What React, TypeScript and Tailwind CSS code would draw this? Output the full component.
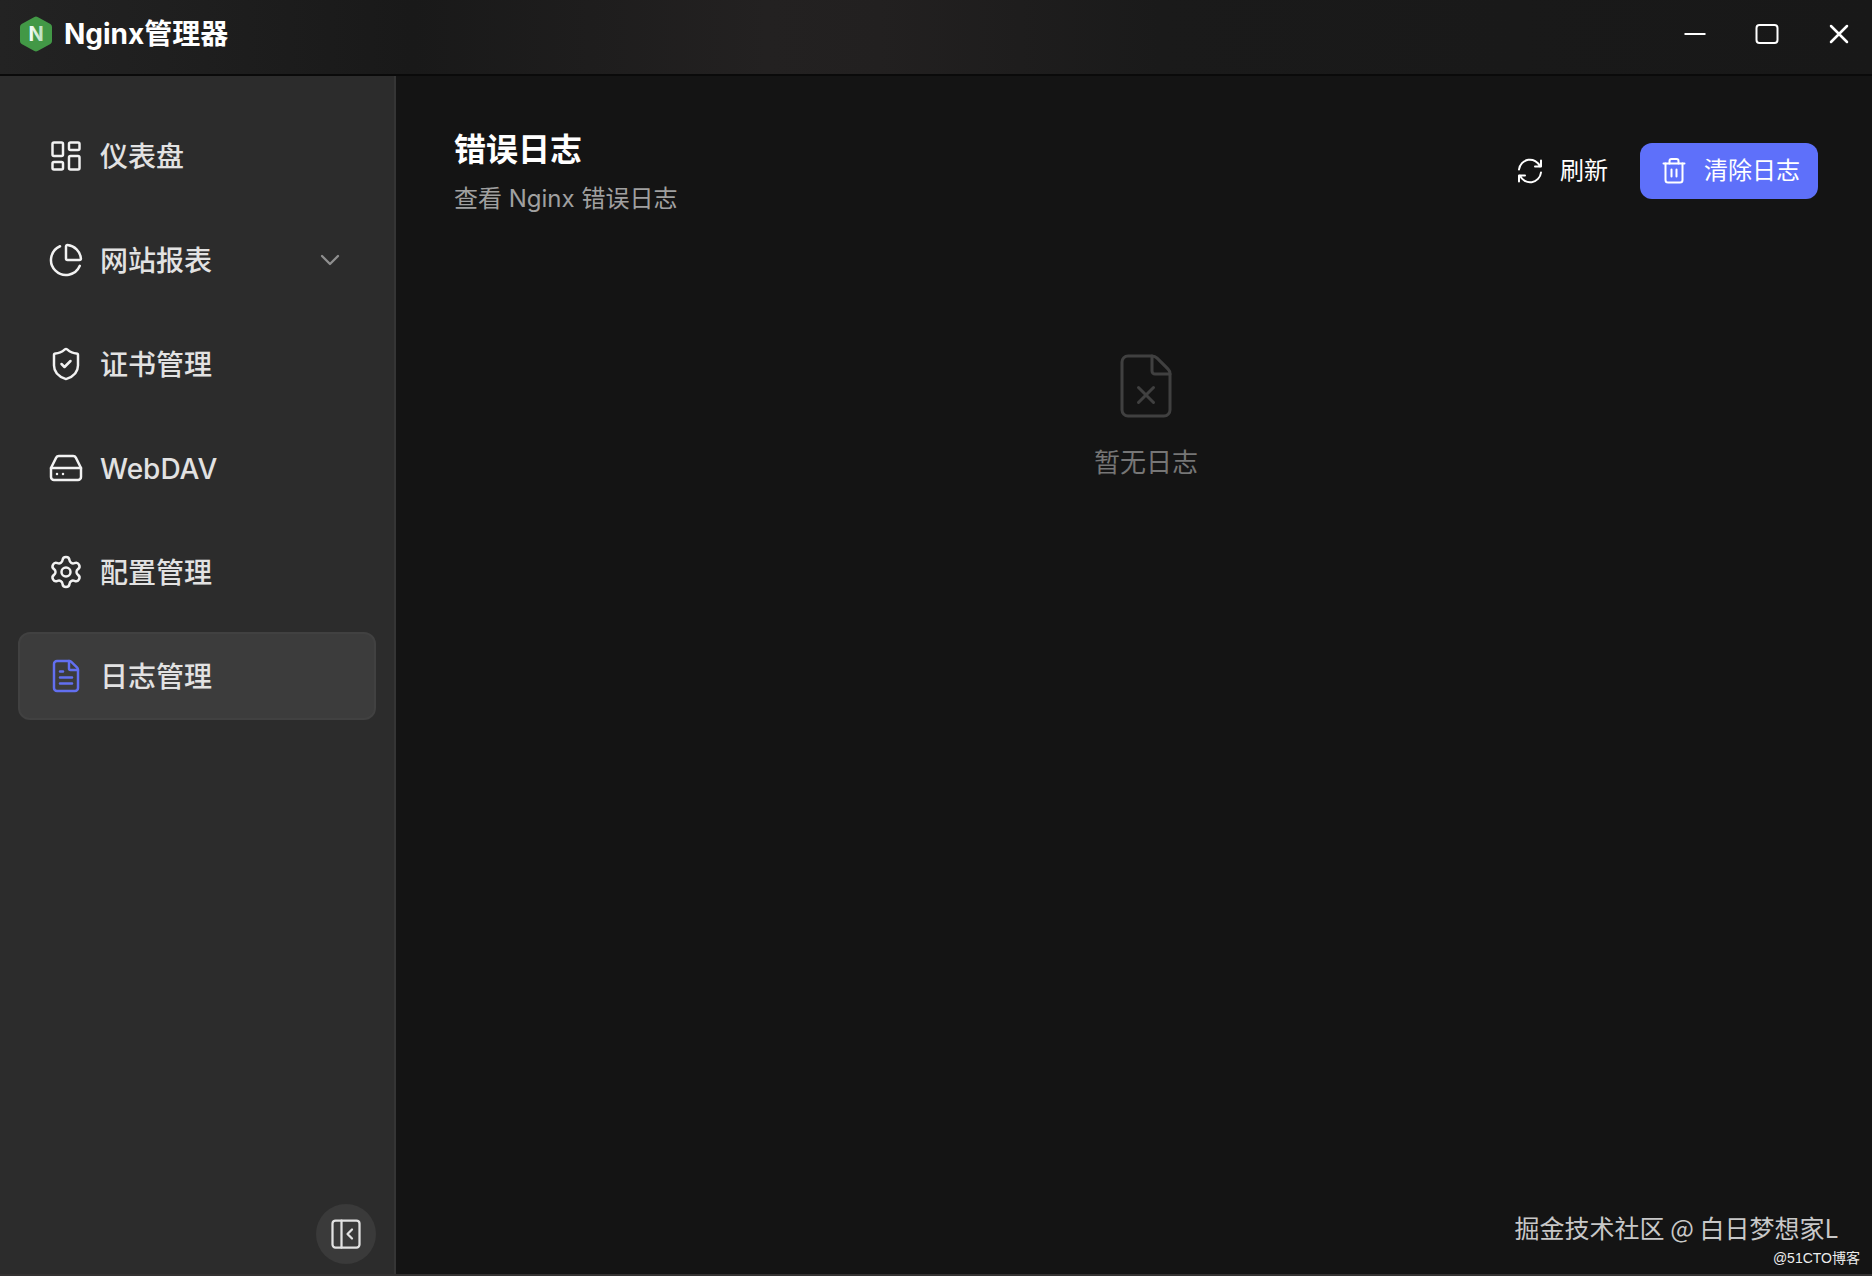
import React, { useState } from 'react';
import {
    ChartPie,
    ChevronDown,
    FileText,
    FileX,
    HardDrive,
    LayoutDashboard,
    PanelLeftClose,
    Settings,
    ShieldCheck,
    type LucideIcon,
} from 'lucide-react';

interface NavItem {
    id: string;
    label: string;
    icon: LucideIcon;
    expandable?: boolean;
}

const navItems: NavItem[] = [
    { id: 'dashboard', label: '仪表盘', icon: LayoutDashboard },
    { id: 'reports', label: '网站报表', icon: ChartPie, expandable: true },
    { id: 'certs', label: '证书管理', icon: ShieldCheck },
    { id: 'webdav', label: 'WebDAV', icon: HardDrive },
    { id: 'config', label: '配置管理', icon: Settings },
    { id: 'logs', label: '日志管理', icon: FileText },
];

const Logo: React.FC = () => (
    <svg viewBox="0 0 32 36" className="w-8 h-9 shrink-0" aria-hidden="true">
        <path
            d="M14.4.9a3.2 3.2 0 0 1 3.2 0l12.8 7.2A3.2 3.2 0 0 1 32 10.9v14.2a3.2 3.2 0 0 1-1.6 2.8l-12.8 7.2a3.2 3.2 0 0 1-3.2 0L1.6 27.9A3.2 3.2 0 0 1 0 25.1V10.9a3.2 3.2 0 0 1 1.6-2.8z"
            fill="#429846"
        />
        <defs>
            <linearGradient id="logo-letter" x1="0" y1="0" x2="1" y2="0">
                <stop offset="0" stopColor="#ffffff" />
                <stop offset="1" stopColor="#b5dcb7" />
            </linearGradient>
        </defs>
        <text
            x="16"
            y="25"
            textAnchor="middle"
            fontSize="20"
            fontWeight="700"
            fontFamily="Inter, sans-serif"
            fill="url(#logo-letter)"
        >
            N
        </text>
    </svg>
);

const RefreshIcon: React.FC = () => (
    <svg
        viewBox="0 0 28 28"
        className="w-7 h-7"
        fill="none"
        stroke="currentColor"
        strokeWidth="2"
        strokeLinecap="round"
        strokeLinejoin="round"
        aria-hidden="true"
    >
        <path d="M3 12.5a11 11 0 0 1 21-3.200" />
        <path d="M25 3.500v6h-6" />
        <path d="M25 15.500a11 11 0 0 1-21 3.200" />
        <path d="M3 24.500v-6h6" />
    </svg>
);

const TrashIcon: React.FC = () => (
    <svg
        viewBox="0 0 28 28"
        className="w-7 h-7"
        fill="none"
        stroke="currentColor"
        strokeWidth="2"
        strokeLinecap="round"
        strokeLinejoin="round"
        aria-hidden="true"
    >
        <path d="M3.5 6.5h21" />
        <path d="M5.5 6.5V23A2.5 2.5 0 0 0 8 25.5h12a2.5 2.5 0 0 0 2.5-2.5V6.5" />
        <path d="M9.5 6.5V4a2 2 0 0 1 2-2h5a2 2 0 0 1 2 2v2.5" />
        <path d="M11.5 12.5v7M16.5 12.5v7" />
    </svg>
);

const WindowControls: React.FC = () => (
    <div className="flex items-center gap-4 pr-[5px] text-white">
        <button aria-label="最小化" className="w-14 h-14 flex items-center justify-center">
            <svg viewBox="0 0 24 24" className="w-6 h-6" fill="none" stroke="currentColor" strokeWidth="2">
                <path d="M1.5 12h21" />
            </svg>
        </button>
        <button aria-label="最大化" className="w-14 h-14 flex items-center justify-center">
            <svg viewBox="0 0 24 24" className="w-6 h-6" fill="none" stroke="currentColor" strokeWidth="2">
                <rect x="1.5" y="3" width="21" height="18" rx="3" />
            </svg>
        </button>
        <button aria-label="关闭" className="w-14 h-14 flex items-center justify-center">
            <svg viewBox="0 0 24 24" className="w-6 h-6" fill="none" stroke="currentColor" strokeWidth="2.5" strokeLinecap="round">
                <path d="m4 4 16 16M20 4 4 20" />
            </svg>
        </button>
    </div>
);

interface SidebarProps {
    active: string;
    onSelect: (id: string) => void;
}

const Sidebar: React.FC<SidebarProps> = ({ active, onSelect }) => (
    <aside className="w-[396px] shrink-0 flex flex-col justify-between bg-[#2c2c2c] border-r-2 border-[#353535] px-[18px] pt-9 pb-2.5">
        <nav className="flex flex-col gap-4">
            {navItems.map(({ id, label, icon: Icon, expandable }) => (
                <button
                    key={id}
                    onClick={() => onSelect(id)}
                    className={`h-[88px] flex items-center rounded-xl border-2 px-7 text-[28px] font-medium text-[#e2e2e2] ${
                        id === active ? 'bg-[#3c3c3c] border-[#414141]' : 'border-transparent'
                    }`}
                >
                    <Icon
                        size={36}
                        strokeWidth={1.65}
                        className={id === active ? 'text-[#626ff0]' : 'text-[#f2f2f2]'}
                    />
                    <span className="ml-4 pt-0.5">{label}</span>
                    {expandable && <ChevronDown size={32} strokeWidth={1.75} className="ml-auto text-[#8f8f8f]" />}
                </button>
            ))}
        </nav>
        <button
            aria-label="收起侧边栏"
            className="self-end w-[60px] h-[60px] rounded-full bg-[#3a3a3a] text-[#e2e2e2] flex items-center justify-center"
        >
            <PanelLeftClose size={36} strokeWidth={1.5} />
        </button>
    </aside>
);

const App: React.FC = () => {
    const [active, setActive] = useState('logs');

    return (
        <div className="relative min-h-screen flex flex-col bg-[#141414] border-b-2 border-[#343232] font-[Inter,'Noto_Sans_CJK_SC',sans-serif]">
            <header className="h-[76px] shrink-0 flex items-start justify-between border-b-2 border-[#0a0a0a] bg-[linear-gradient(90deg,#232323_0%,#191919_22%,#232121_41%,#222020_47%,#1a1a1a_62%,#181818_100%)] pt-1.5 pl-5">
                <div className="h-14 flex items-center gap-3">
                    <Logo />
                    <h1 className="text-[28px] font-bold text-white">Nginx管理器</h1>
                </div>
                <WindowControls />
            </header>

            <div className="flex-1 flex">
                <Sidebar active={active} onSelect={setActive} />

                <main className="flex-1 pl-[58px] pr-[34px] pt-12">
                    <div className="flex items-start justify-between pr-5">
                        <div>
                            <h2 className="text-[32px] leading-[52px] font-bold text-white">错误日志</h2>
                            <p className="text-2xl leading-[46px] text-[#a0a0a0]">查看 Nginx 错误日志</p>
                        </div>
                        <div className="mt-[19px] flex gap-3 text-2xl text-white">
                            <button className="h-14 flex items-center gap-4 px-5 rounded-xl">
                                <RefreshIcon />
                                刷新
                            </button>
                            <button className="h-14 flex items-center gap-4 pl-5 pr-[18px] rounded-xl bg-[#5e70fa]">
                                <TrashIcon />
                                清除日志
                            </button>
                        </div>
                    </div>

                    <div className="flex flex-col items-center gap-5 pt-32">
                        <FileX size={72} strokeWidth={1} className="text-[#404040]" />
                        <p className="text-[26px] leading-[41px] text-[#767676]">暂无日志</p>
                    </div>
                </main>
            </div>

            <div className="absolute right-3 bottom-1.5 flex flex-col items-end font-['Noto_Sans_CJK_SC',sans-serif]">
                <span className="mr-[22px] text-[25px] leading-[42px] text-[#c8c8c8]">掘金技术社区 @ 白日梦想家L</span>
                <span className="text-sm leading-5 text-[#ededed] font-['Liberation_Sans','Noto_Sans_CJK_SC',sans-serif]">
                    @51CTO博客
                </span>
            </div>
        </div>
    );
};

export default App;
